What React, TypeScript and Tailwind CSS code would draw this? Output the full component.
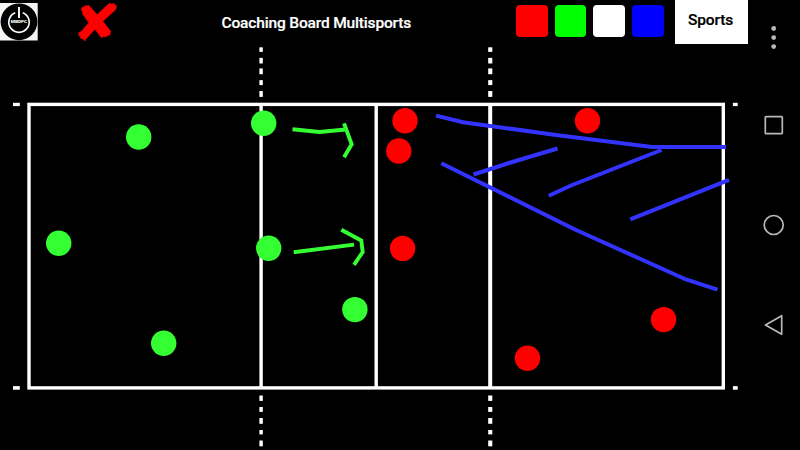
const COURT_EDGE = '#ffffff';

const dashesTop = [[47.3, 4.6], [57.9, 5.6], [68.4, 5.8], [80.1, 5], [91, 5.9]];
const dashesBottom = [[395.5, 5.4], [407, 4.9], [418, 5.8], [430, 4.4], [440.5, 5.8]];

const greenPlayers = [
  [138.7, 137], [58.7, 243.3], [263.7, 123.3], [268.7, 248.3], [354.9, 309.6], [163.7, 343.3],
];
const redPlayers = [
  [405, 120.7], [398.8, 151], [402.6, 248.4], [587.5, 120.8], [663.6, 319.6], [527.5, 358.3],
];

const greenStrokes = [
  '292.5,129.3 319.5,132 345.5,129.5',
  '344,123.3 351.7,144.3 344,157.3',
  '293.7,252.2 354,244.6',
  '341.3,229.7 361.3,240.5 362.7,252 354,264.8',
];
const blueStrokes = [
  '436,115.6 463,122.2 556,135 652,147 726,147',
  '473.5,174.5 509,163 557.5,148.5',
  '548.8,195.7 571,185.5 661.5,150',
  '630.3,219.3 729,179.8',
  '441.3,163.3 575,229.5 686,279.5 717.5,289.7',
];

function PowerLogo() {
  return (
    <svg className="mt-[3px] h-[38px] w-[38px] shrink-0" viewBox="0 0 38 38">
      <rect width="37.7" height="37.5" fill="#f5f5f5" />
      <circle cx="19" cy="18.8" r="18.4" fill="#000" />
      <path d="M15.2 9.7A10.2 10.2 0 1 0 22.8 9.7" fill="none" stroke="#fff" strokeWidth="1.6" />
      <path d="M19 4v11" stroke="#fff" strokeWidth="1.9" />
      <rect x="10" y="16" width="18" height="5" fill="#000" />
      <text x="19" y="20.2" textAnchor="middle" textLength="16.5" lengthAdjust="spacingAndGlyphs" fill="#fff" className="font-['Roboto',sans-serif] text-[4.3px] font-black">MBDPC</text>
    </svg>
  );
}

function CrossMark() {
  return (
    <svg className="ml-[40px] mt-[2px] h-[40px] w-[40px] shrink-0" viewBox="78 2 40 40" fill="#ff0000">
      <path d="M81.8 7.6L84 6.9L85.7 5.4L87.2 6L88.8 5.3L97.2 14.8L109.3 3.2L111.7 4.2L113.7 3.3L114.7 4.8L116.6 6L115.7 9.6L102.8 21.2L110.8 31.4L109.4 35.4L107 35.2L106.2 37L103.6 36.6L101.4 37.6L95 29.2L85.5 39.4L85 41L82.6 38.8L80.8 38.4L80.3 36.4L78.6 35.3L79.2 32.2L81.3 31.4L88.9 22.8L82.6 14L82.9 12L81.4 10.5Z" stroke="#ff0000" strokeWidth=".6" />
    </svg>
  );
}

function Board() {
  return (
    <svg className="h-[406px] w-[748px] shrink-0" viewBox="0 44 748 406">
      <g fill="none" stroke={COURT_EDGE} strokeWidth="3.4">
        <rect x="29" y="104.4" width="694.3" height="283.5" />
        <path d="M261.1 104V388M376.2 104V388" />
        <path d="M490.2 104V388" strokeWidth="4" />
      </g>
      <g fill={COURT_EDGE}>
        <rect x="13" y="102.8" width="6.8" height="3.3" />
        <rect x="13" y="386.1" width="6.8" height="3.6" />
        <rect x="732.9" y="102.8" width="4.8" height="3.3" />
        <rect x="732.9" y="386.1" width="4.8" height="3.6" />
        {[...dashesTop, ...dashesBottom].map(([y, h]) => (
          <g key={y}>
            <rect x="259.4" y={y} width="3.4" height={h} />
            <rect x="488.2" y={y} width="4.1" height={h} />
          </g>
        ))}
      </g>
      <g fill="#33ff33">
        {greenPlayers.map(([x, y]) => <circle key={x} cx={x} cy={y} r="12.7" />)}
      </g>
      <g fill="#ff0000">
        {redPlayers.map(([x, y]) => <circle key={x} cx={x} cy={y} r="12.7" />)}
      </g>
      <g fill="none" stroke="#33ff33" strokeWidth="3.9">
        {greenStrokes.map((p) => <polyline key={p} points={p} />)}
      </g>
      <g fill="none" stroke="#3333ff" strokeWidth="4">
        {blueStrokes.map((p) => <polyline key={p} points={p} />)}
      </g>
    </svg>
  );
}

function SystemNav() {
  return (
    <nav className="flex w-[52px] flex-col items-center pt-[25px]">
      <svg className="h-[26px] w-[20px]" viewBox="764 25 20 26" fill="#b8b8b8">
        <circle cx="773.7" cy="28.5" r="2.4" />
        <circle cx="773.7" cy="37.6" r="2.4" />
        <circle cx="773.7" cy="46.6" r="2.4" />
      </svg>
      <svg className="mt-[63px] h-[22px] w-[22px]" viewBox="763 114 22 22" fill="none" stroke="#b8b8b8" strokeWidth="1.7">
        <rect x="765.3" y="116.6" width="17" height="17" rx=".7" />
      </svg>
      <svg className="mt-[78px] h-[22px] w-[22px]" viewBox="763 214 22 22" fill="none" stroke="#b8b8b8" strokeWidth="1.7">
        <circle cx="773.7" cy="225" r="9.5" />
      </svg>
      <svg className="mt-[78px] h-[22px] w-[22px]" viewBox="763 314 22 22" fill="none" stroke="#b8b8b8" strokeWidth="1.7" strokeLinejoin="round">
        <path d="M765.5 325L781.7 315.7V334.3Z" />
      </svg>
    </nav>
  );
}

export default function App() {
  return (
    <div className="flex h-[450px] w-[800px] overflow-hidden bg-black font-['Roboto',sans-serif]">
      <main className="flex w-[748px] flex-col">
        <header className="flex h-[44px] items-start">
          <PowerLogo />
          <CrossMark />
          <h1 className="ml-[103.5px] mt-[12px] w-[294.5px] whitespace-nowrap text-[15.5px] font-medium leading-[22px] tracking-[-0.16px] text-white [-webkit-text-stroke:0.2px_white]">
            Coaching Board Multisports
          </h1>
          <div className="mt-[5.3px] flex gap-[6.9px]">
            <div className="h-[31.8px] w-[31.8px] rounded-[4px] bg-[#ff0000]" />
            <div className="h-[31.8px] w-[31.8px] rounded-[4px] bg-[#00ff00]" />
            <div className="h-[31.8px] w-[31.8px] rounded-[4px] bg-white" />
            <div className="h-[31.8px] w-[31.8px] rounded-[4px] bg-[#0000ff]" />
          </div>
          <button className="ml-auto flex h-[43.5px] w-[73px] justify-center bg-white pr-[2px] pt-[9px] text-[15.5px] font-medium leading-[22px] tracking-[-0.16px] text-black [-webkit-text-stroke:0.2px_black]">
            Sports
          </button>
        </header>
        <Board />
      </main>
      <SystemNav />
    </div>
  );
}
